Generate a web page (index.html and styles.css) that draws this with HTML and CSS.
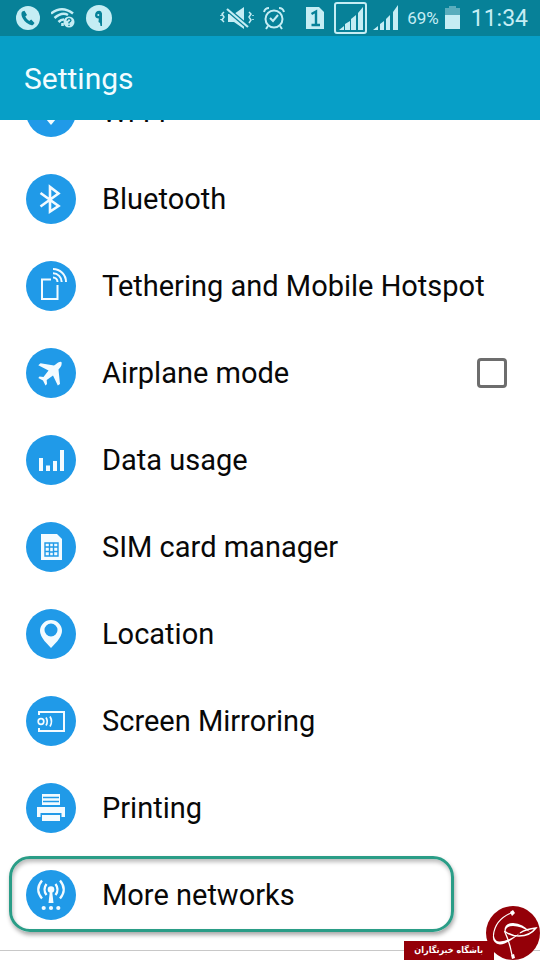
FILE: index.html
```html
<!DOCTYPE html>
<html lang="en">
<head>
<meta charset="utf-8">
<title>Settings</title>
<meta name="viewport" content="width=device-width, initial-scale=1">
<link rel="stylesheet" href="styles.css">
</head>
<body>
<div class="screen">
  <div class="status">
    <div class="status-left">
      <svg width="24" height="24" viewBox="0 0 24 24"><circle cx="12" cy="12" r="12" fill="#c5edf4"/><path d="M6.300 5.500 8.500 4.700 11 9 9.300 10.500Q10.500 13.200 13.200 15L15.200 13.600 18.500 17 17 19Q14.500 20 10.500 16.800 5.500 12.500 5.400 8Q5.400 6.200 6.300 5.500Z" fill="#078198"/></svg>
      <svg width="24" height="24" viewBox="0 0 24 24" fill="none" stroke="#c5edf4" stroke-width="2.600"><path d="M0 7.500Q11-1 22 7.500M3.500 12Q11 5.500 17 9M7.500 16Q10 13.400 13 13.500M11.500 17V20"/><circle cx="18" cy="16" r="5.500" fill="#c5edf4" stroke="none"/><path d="M16 14.700Q16.200 12.700 18 12.700 20 12.800 20 14.400 19.800 15.500 18 16.400V17.500M18 18.700V20" stroke="#078198" stroke-width="1.300"/></svg>
      <svg width="26" height="26" viewBox="0 0 26 26"><circle cx="13" cy="13" r="13" fill="#c5edf4"/><path d="M13.500 5.800Q9 6 9 10.500 9.300 13.500 12.800 13.500L12.500 17 14 18 14.500 21H16V8.500Q15.500 6 13.500 5.800Z" fill="#078198"/><circle cx="12.300" cy="10" r="1" fill="#c5edf4"/></svg>
    </div>
    <div class="status-right">
      <svg class="mute" width="34" height="24" viewBox="0 0 34 24" fill="none" stroke="#c5edf4"><path d="M8 8H14L24 1V23L14 16H8Z" fill="#c5edf4" stroke="none"/><path d="M7 3 28 21" stroke="#078198" stroke-width="4.500"/><path d="M7 3 28 21" stroke-width="2.200"/><path d="M4 6 2 8 4 11 2 14 4 16M1 9V10M1 13V14M29 6 31 8 29 11 31 14 29 17M33 9V10M33 13V14" stroke-width="1.500"/></svg>
      <svg class="alarm" width="22" height="24" viewBox="0 0 22 24" fill="none" stroke="#c5edf4" stroke-width="2"><circle cx="11" cy="13" r="8.500"/><path d="M1 6Q2 2 6 2M16 2Q20 2 21 6M5 20 3 23M17 20 19 23M7 12 10 15 15 9"/></svg>
      <svg class="sim" width="20" height="24" viewBox="0 0 20 24"><path d="M1 1H14L19 6V23H1Z" fill="#c5edf4"/><path d="M6.500 8 11 5.500V19M6.500 19H15" fill="none" stroke="#078198" stroke-width="2.400"/></svg>
      <svg class="boxed" width="34" height="32" viewBox="0 0 34 32"><rect x="1" y="1" width="31" height="30" rx="2" fill="none" stroke="#c5edf4" stroke-width="2"/><path d="M5 28 10 24V28ZM11 22 16 19V28H11ZM17 17 22 13V28H17ZM24 11 29 5V28H24Z" fill="#c5edf4"/></svg>
      <svg class="signal" width="26" height="26" viewBox="0 0 26 26"><path d="M0 25 5 21V25ZM7 19 11 16V25H7ZM13 14 17 10V25H13ZM20 7 25 0V25H20Z" fill="#c5edf4"/></svg>
      <span class="percent">69%</span>
      <svg class="battery" width="15" height="24" viewBox="0 0 15 24"><path d="M4 0H11V2H15V9H0V2H4Z" fill="#59adbd"/><path d="M0 9H15V23H0Z" fill="#c5edf4"/></svg>
      <time class="clock">11:34</time>
    </div>
  </div>
  <header class="header"><h1>Settings</h1></header>
  <main class="viewport">
    <ul class="list">
      <li class="row"><a href="#wifi"><svg class="icon" viewBox="0 0 50 50"><circle cx="25" cy="25" r="25"/><path class="fill" d="M25 38 10 20Q25 8 40 20Z"/></svg><span>Wi-Fi</span></a></li>
      <li class="row"><a href="#bluetooth"><svg class="icon" viewBox="0 0 50 50"><circle cx="25" cy="25" r="25"/><path class="line" d="M14.500 19 32.500 32 24 37.500V13L32.500 19.500 14.500 32.500" stroke-width="2.600"/></svg><span>Bluetooth</span></a></li>
      <li class="row"><a href="#tethering"><svg class="icon" viewBox="0 0 50 50"><circle cx="25" cy="25" r="25"/><path class="line" d="M25 18.500H16V38H31.500V24" stroke-width="2"/><path class="line" d="M27 16.500A4.500 4.500 0 0 1 31.500 21M27 12.300A8.700 8.700 0 0 1 35.700 21M27 8A13 13 0 0 1 40 21" stroke-width="2"/></svg><span>Tethering and Mobile Hotspot</span></a></li>
      <li class="row"><label for="airplane"><svg class="icon" viewBox="0 0 50 50"><circle cx="25" cy="25" r="25"/><path class="fill" d="M35.500 14Q33 13 29.500 16.500L28 17.500 14.500 15.200 12.300 17.200 22.500 22.500 17.500 29 13.500 28.600 12.300 30 17 32.500 19.500 37.500 21 36 20.700 32 27 27.500 31.800 37.500 34 36 32.500 21.500Q36.500 17.500 35.500 14Z"/></svg><span>Airplane mode</span></label><input id="airplane" class="check" type="checkbox"></li>
      <li class="row"><a href="#data"><svg class="icon" viewBox="0 0 50 50"><circle cx="25" cy="25" r="25"/><path class="fill" d="M13 23H17V36H13ZM20 30.500H24V36H20ZM27 26H31V36H27ZM34 15H38V36H34Z"/></svg><span>Data usage</span></a></li>
      <li class="row"><a href="#sim"><svg class="icon" viewBox="0 0 50 50"><circle cx="25" cy="25" r="25"/><path class="fill" d="M15 12H31L36 17V38H15Z"/><path d="M19 21H32V34H19ZM19 25H23M19 29.500H23M28 25H32M28 29.500H32M23.500 21V34M27.500 21V34M23.500 25H27.500M23.500 30H27.500" fill="none" stroke="#209ae8" stroke-width="1.400"/></svg><span>SIM card manager</span></a></li>
      <li class="row"><a href="#location"><svg class="icon" viewBox="0 0 50 50"><circle cx="25" cy="25" r="25"/><path class="fill" fill-rule="evenodd" d="M25 11A11 11 0 0 1 36 22Q36 26 31.500 32L25 39 18.500 32Q14 26 14 22A11 11 0 0 1 25 11ZM25 14.500A6.500 6.500 0 1 0 25 27.500 6.500 6.500 0 1 0 25 14.500Z"/></svg><span>Location</span></a></li>
      <li class="row"><a href="#mirroring"><svg class="icon" viewBox="0 0 50 50"><circle cx="25" cy="25" r="25"/><path class="line" d="M13 19V16H38V35H13V32" stroke-width="2"/><circle class="line" cx="15" cy="25.500" r="2.800" stroke-width="1.700"/><path class="line" d="M20 21.500Q22.500 25.500 20 29.500M24 20.500Q27 25.500 24 30.500" stroke-width="1.700"/></svg><span>Screen Mirroring</span></a></li>
      <li class="row"><a href="#printing"><svg class="icon" viewBox="0 0 50 50"><circle cx="25" cy="25" r="25"/><path class="fill" d="M16 11H34V22H16ZM11 24H39V34H35.500V30H14.500V34H11ZM16 32H34V38H16Z"/><path d="M17 14.500H33M17 18.500H33" stroke="#209ae8" stroke-width="1.300"/></svg><span>Printing</span></a></li>
      <li class="row marked"><a href="#networks"><svg class="icon" viewBox="0 0 50 50"><circle cx="25" cy="25" r="25"/><circle class="fill" cx="25" cy="19.500" r="3.300"/><path class="fill" d="M24 20H26L27.500 33H22.500Z"/><path class="line" d="M20.500 14Q16.500 19.500 20.500 25M29.500 14Q33.500 19.500 29.500 25M16 10.500Q8.500 19.500 16 28.500M34 10.500Q41.500 19.500 34 28.500" stroke-width="2.300"/><circle class="fill" cx="17.700" cy="38" r="2.100"/><circle class="fill" cx="25" cy="38" r="2.100"/><circle class="fill" cx="32.300" cy="38" r="2.100"/></svg><span>More networks</span></a></li>
    </ul>
  </main>
  <div class="brand">
    <span class="brand-name" lang="fa" dir="rtl">باشگاه خبرنگاران</span>
    <svg class="brand-logo" viewBox="0 0 54 54"><circle cx="27" cy="27" r="27" fill="#940008"/><path d="M25 7Q9 14 7.500 29" fill="none" stroke="#fff" stroke-width="1.200"/><path d="M8 25Q7 35 13 35.500 21 36 34 27 22 38 14 38.500 4 37 8 25Z" fill="#fff"/><path d="M34 27Q40 23 50 22 44 30 33 30 25 30 19 25.500" fill="none" stroke="#fff" stroke-width="1.500"/><path d="M18.500 25.500Q18 17 27 17 37 17.500 44 26 35 20 27 20 20 20 19.500 25.500Z" fill="#fff"/><path d="M18.500 25Q24 37 26 49" fill="none" stroke="#fff" stroke-width="1.300"/><path d="M24 6 27 4 29 7 26 10ZM25 49 28 48 29 52 26 53Z" fill="#fff"/></svg>
  </div>
</div>
</body>
</html>
```
FILE: styles.css
```css
* { box-sizing: border-box; }
body { margin: 0; background: #fff; color: #080808; font-family: Roboto, "Liberation Sans", sans-serif; }
svg { display: block; flex: none; }
.screen { position: relative; min-height: 100vh; display: flex; flex-direction: column; overflow: hidden; }
.status { height: 36px; padding: 0 12px 0 16px; display: flex; justify-content: space-between; align-items: center; background: #078198; color: #c5edf4; }
.status-left, .status-right { display: flex; align-items: center; }
.status-left { gap: 11px; }
.mute { margin-right: 9px; }
.alarm { margin-right: 20px; }
.sim { margin-right: 9px; }
.boxed { margin-right: 5px; }
.signal { margin-right: 8px; }
.percent { margin-right: 6px; font-size: 17px; }
.battery { margin-right: 11px; }
.clock { font-size: 23px; }
.header { height: 84px; padding: 0 24px; display: flex; align-items: center; background: #079fc7; color: #f2fcff; }
.header h1 { margin: 0; font-size: 30px; font-weight: 400; }
.viewport { overflow: hidden; }
.list { list-style: none; margin: -52px 0 0; padding: 0 0 12px; border-bottom: 1px solid #c8c8c8; }
.row { position: relative; height: 87px; padding: 0 33px 0 26px; display: flex; align-items: center; justify-content: space-between; }
.row a, .row label { flex: 1; display: flex; align-items: center; gap: 26px; color: inherit; text-decoration: none; font-size: 29px; white-space: nowrap; }
.icon { width: 50px; height: 50px; fill: #209ae8; }
.icon .fill { fill: #f3fbff; }
.icon .line { fill: none; stroke: #f3fbff; }
.check { appearance: none; width: 30px; height: 30px; margin: 0; border: 3px solid #6d6d6d; border-radius: 4px; background: #fff; }
.marked::after { content: ""; position: absolute; inset: 5px 86px 6px 9px; border: 3px solid #2a9d87; border-radius: 21px; box-shadow: 1px 3px 4px #aaa, inset 1px 3px 4px #bbb; pointer-events: none; }
.brand { position: absolute; right: 0; bottom: 0; display: flex; align-items: flex-end; }
.brand-name { height: 19px; width: 90px; padding-right: 11px; background: #940008; color: #fff; font: bold 9px/18px "DejaVu Sans Condensed", "DejaVu Sans", sans-serif; white-space: nowrap; }
.brand-logo { width: 54px; height: 54px; margin-left: -8px; }
```
